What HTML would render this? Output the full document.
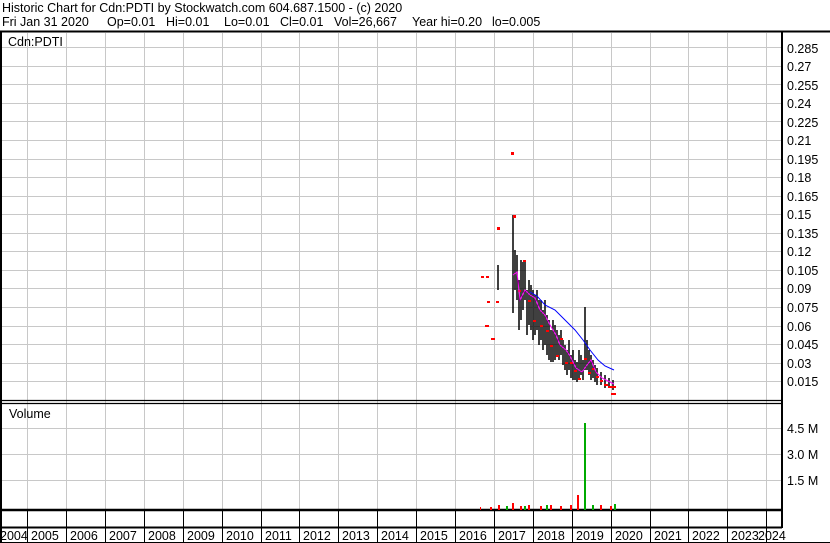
<!DOCTYPE html>
<html><head><meta charset="utf-8"><style>
html,body{margin:0;padding:0;background:#fff;}
body{width:830px;height:543px;overflow:hidden;position:relative;font-family:"Liberation Sans",Arial,sans-serif;}
svg{position:absolute;left:0;top:0;}
text{white-space:pre;}
</style></head><body>
<svg width="830" height="543" viewBox="0 0 830 543" xmlns="http://www.w3.org/2000/svg" font-family="Liberation Sans, Arial, sans-serif">
<rect width="830" height="543" fill="#fff"/>
<text x="2" y="12" font-size="12.5" fill="#000" xml:space="preserve">Historic Chart for Cdn:PDTI by Stockwatch.com 604.687.1500 - (c) 2020</text>
<text y="26" font-size="12.5" fill="#000"><tspan x="2">Fri Jan 31 2020</tspan><tspan x="107">Op=0.01</tspan><tspan x="166">Hi=0.01</tspan><tspan x="224">Lo=0.01</tspan><tspan x="280">Cl=0.01</tspan><tspan x="334">Vol=26,667</tspan><tspan x="412">Year hi=0.20</tspan><tspan x="492">lo=0.005</tspan></text>
<g stroke="#c8c8c8" stroke-width="1">
<path d="M27.5 33V509M66.5 33V509M105.5 33V509M144.5 33V509M183.5 33V509M222.5 33V509M261.5 33V509M299.5 33V509M338.5 33V509M377.5 33V509M416.5 33V509M455.5 33V509M494.5 33V509M533.5 33V509M572.5 33V509M611.5 33V509M650.5 33V509M688.5 33V509M727.5 33V509M766.5 33V509"/>
<path d="M2 47.5H781M2 66.5H781M2 84.5H781M2 103.5H781M2 121.5H781M2 140.5H781M2 159.5H781M2 177.5H781M2 196.5H781M2 214.5H781M2 233.5H781M2 251.5H781M2 270.5H781M2 288.5H781M2 307.5H781M2 326.5H781M2 344.5H781M2 363.5H781M2 381.5H781"/>
<path d="M2 428.5H781M2 454.5H781M2 480.5H781"/>
</g>
<g stroke="#000" fill="none">
<path d="M0 31.5H830" stroke-width="2"/>
<path d="M1 31V543" stroke-width="2"/>
<path d="M782 31V528" stroke-width="2"/>
<path d="M0 400.5H782M0 403.5H782" stroke-width="1.2"/>
<path d="M0 510H782" stroke-width="2.5"/>
<path d="M0 527.5H782" stroke-width="2"/>
<path d="M0 542.5H830" stroke-width="1"/>
<path d="M27.5 510V543M66.5 510V543M105.5 510V543M144.5 510V543M183.5 510V543M222.5 510V543M261.5 510V543M299.5 510V543M338.5 510V543M377.5 510V543M416.5 510V543M455.5 510V543M494.5 510V543M533.5 510V543M572.5 510V543M611.5 510V543M650.5 510V543M688.5 510V543M727.5 510V543M766.5 510V543"/>
</g>
<text x="8" y="46" font-size="12.5">Cdn:PDTI</text>
<text x="9" y="418" font-size="12.5">Volume</text>
<g font-size="12.5">
<text x="787" y="53">0.285</text><text x="787" y="71">0.27</text><text x="787" y="90">0.255</text><text x="787" y="108">0.24</text><text x="787" y="127">0.225</text><text x="787" y="145">0.21</text><text x="787" y="164">0.195</text><text x="787" y="182">0.18</text><text x="787" y="201">0.165</text><text x="787" y="219">0.15</text><text x="787" y="238">0.135</text><text x="787" y="256">0.12</text><text x="787" y="275">0.105</text><text x="787" y="293">0.09</text><text x="787" y="312">0.075</text><text x="787" y="331">0.06</text><text x="787" y="349">0.045</text><text x="787" y="368">0.03</text><text x="787" y="386">0.015</text>
<text x="787" y="433">4.5 M</text><text x="787" y="459">3.0 M</text><text x="787" y="485">1.5 M</text>
</g>
<g font-size="12.5">
<text x="0" y="540">2004</text><text x="31" y="540">2005</text><text x="70" y="540">2006</text><text x="109" y="540">2007</text><text x="148" y="540">2008</text><text x="187" y="540">2009</text><text x="226" y="540">2010</text><text x="265" y="540">2011</text><text x="303" y="540">2012</text><text x="342" y="540">2013</text><text x="381" y="540">2014</text><text x="420" y="540">2015</text><text x="459" y="540">2016</text><text x="498" y="540">2017</text><text x="537" y="540">2018</text><text x="576" y="540">2019</text><text x="615" y="540">2020</text><text x="654" y="540">2021</text><text x="692" y="540">2022</text><text x="731" y="540">2023</text><text x="758" y="540">2024</text>
</g>
<g stroke="#000" stroke-width="1.5">
<path d="M498 265V290M513 215V313M515 250V290M517 255V300M519 280V330M521 260V320M523 262V310M525 260V300M527 290V335M529 280V325M531 285V330M533 290V340M535 295V335M537 290V330M539 300V345M541 300V340M543 310V350M545 300V345M547 315V355M549 320V360M551 330V362M553 320V362M555 325V360M557 330V355M559 335V360M561 330V355M563 340V365M565 345V370M567 350V375M569 340V370M571 355V378M573 350V380M575 360V380M577 362V382M579 350V380M581 355V375M583 360V380M585 307V370M587 340V370M589 350V375M591 355V380M593 360V378M595 365V382M597 368V385M601 372V385M605 375V388M609 378V388M613 380V390"/>
</g>
<g fill="#f00">
<rect x="511" y="152" width="3" height="3"/><rect x="497" y="227" width="3" height="3"/><rect x="481" y="276" width="3" height="2"/><rect x="486" y="276" width="3" height="2"/><rect x="487" y="301" width="3" height="2"/><rect x="496" y="301" width="3" height="2"/><rect x="485" y="325" width="4" height="2"/><rect x="491" y="338" width="4" height="2"/>
<rect x="513" y="215" width="3" height="3"/><rect x="523" y="260" width="3" height="2"/><rect x="518" y="290" width="3" height="2"/><rect x="528" y="300" width="3" height="2"/><rect x="533" y="320" width="3" height="2"/><rect x="540" y="325" width="3" height="2"/><rect x="546" y="330" width="3" height="2"/><rect x="550" y="345" width="3" height="2"/><rect x="556" y="355" width="3" height="2"/><rect x="560" y="338" width="3" height="2"/><rect x="565" y="362" width="3" height="2"/><rect x="570" y="362" width="3" height="2"/><rect x="574" y="370" width="3" height="2"/><rect x="578" y="378" width="3" height="2"/><rect x="584" y="358" width="3" height="2"/><rect x="588" y="372" width="3" height="2"/><rect x="592" y="368" width="3" height="2"/><rect x="596" y="376" width="3" height="2"/><rect x="600" y="380" width="3" height="2"/><rect x="604" y="384" width="4" height="2"/><rect x="608" y="386" width="4" height="2"/><rect x="612" y="386" width="4" height="2"/><rect x="611" y="393" width="5" height="2"/>
</g>
<polyline fill="none" stroke="#00f" stroke-width="1" points="530,292 537,296 545,305 555,310 565,320 575,330 583,340 590,350 598,360 605,366 614,370"/>
<polyline fill="none" stroke="#f0f" stroke-width="1" points="513,275 517,272 520,300 525,290 530,295 535,298 540,310 545,315 550,325 556,335 560,345 566,350 570,356 576,368 582,372 587,365 591,360 596,372 602,378 608,381 614,384"/>
<g fill="#f00"><rect x="480" y="507" width="1" height="3"/><rect x="490" y="507" width="2" height="3"/><rect x="498" y="505" width="2" height="5"/><rect x="512" y="503" width="2" height="7"/><rect x="520" y="506" width="2" height="4"/><rect x="528" y="505" width="2" height="5"/><rect x="540" y="506" width="2" height="4"/><rect x="550" y="505" width="2" height="5"/><rect x="560" y="506" width="2" height="4"/><rect x="570" y="505" width="2" height="5"/><rect x="577" y="495" width="2" height="15"/><rect x="600" y="505" width="2" height="5"/><rect x="610" y="506" width="2" height="4"/></g>
<g fill="#0a0"><rect x="506" y="506" width="2" height="4"/><rect x="524" y="506" width="2" height="4"/><rect x="546" y="505" width="2" height="5"/><rect x="584" y="423" width="2" height="87"/><rect x="592" y="505" width="2" height="5"/><rect x="614" y="504" width="2" height="6"/></g>
</svg>
</body></html>
